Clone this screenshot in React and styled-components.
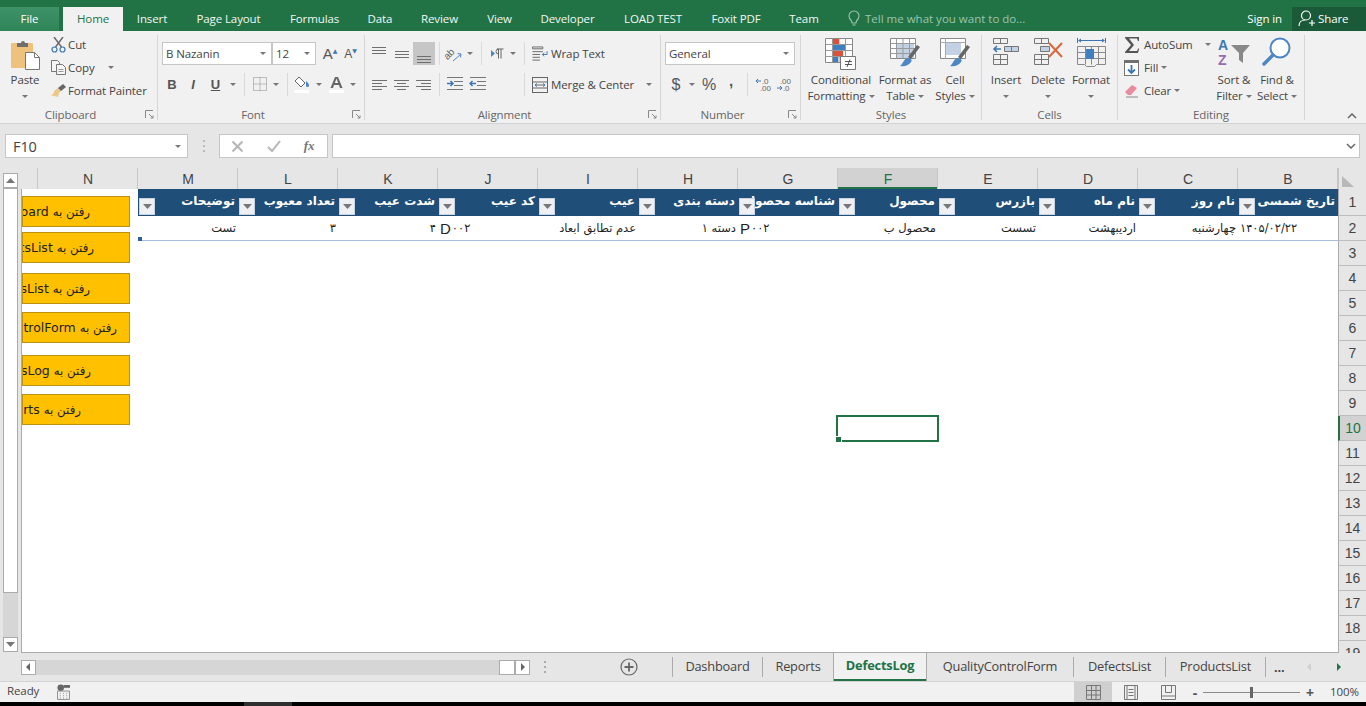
import React from 'react';
import styled, { createGlobalStyle } from 'styled-components';

const UI_FONT = '"Open Sans", "Noto Sans", "DejaVu Sans", sans-serif';
const CELL_FONT = '"DejaVu Sans", "Liberation Sans", sans-serif';
const GREEN = '#217346';

const GlobalStyle = createGlobalStyle`
  html, body { margin: 0; padding: 0; background: #000; }
  * { box-sizing: border-box; }
`;

const Page = styled.div`
  width: 1366px;
  height: 706px;
  overflow: hidden;
  display: flex;
  flex-direction: column;
  font-family: ${UI_FONT};
  font-size: 11.5px;
  letter-spacing: -0.1px;
  color: #444;
`;

/* title bar with ribbon tabs */
const TitleBar = styled.div`
  height: 31px;
  flex: none;
  padding-top: 7px;
  display: flex;
  background: ${GREEN};
`;
const FileTab = styled.div`
  width: 59px;
  margin-right: 4px;
  padding-bottom: 2px;
  display: flex;
  align-items: center;
  justify-content: center;
  color: #fff;
  background: linear-gradient(#3f9268, #2f8558);
`;
const MenuTab = styled.div`
  width: ${p => p.$w}px;
  padding-bottom: 2px;
  display: flex;
  align-items: center;
  justify-content: center;
  color: ${p => (p.$active ? GREEN : '#f2f7f4')};
  background: ${p => (p.$active ? '#f1f1f1' : 'transparent')};
`;
const TellMe = styled.div`
  display: flex;
  align-items: center;
  gap: 5px;
  margin-left: 14px;
  padding-bottom: 2px;
  letter-spacing: 0;
  color: #9cc4ae;
  flex: 1;
`;
const SignIn = styled.div`
  display: flex;
  align-items: center;
  padding-bottom: 2px;
  color: #fff;
  margin-right: 10px;
`;
const ShareTab = styled.div`
  width: 74px;
  display: flex;
  align-items: center;
  gap: 2px;
  padding: 0 0 2px 6px;
  color: #fff;
  background: #1a5a38;
`;

/* ribbon */
const Ribbon = styled.div`
  height: 93px;
  flex: none;
  display: flex;
  background: #f1f1f1;
  border-bottom: 1px solid #d2d2d2;
`;
const Group = styled.div`
  width: ${p => p.$w}px;
  flex: none;
  position: relative;
  display: flex;
  flex-direction: column;
  &::after {
    content: '';
    position: absolute;
    right: 0;
    top: 4px;
    bottom: 3px;
    width: 1px;
    background: #d6d6d6;
  }
`;
const GroupBody = styled.div`
  height: 75px;
  display: flex;
  padding-left: ${p => p.$pad ?? 4}px;
`;
const RowStack = styled.div`
  display: flex;
  flex-direction: column;
  gap: 8px;
  padding-top: 11px;
`;
const ToolRow = styled.div`
  height: 23px;
  display: flex;
  align-items: center;
`;
const GroupFoot = styled.div`
  height: 16px;
  display: flex;
  align-items: center;
  color: #666;
  padding-right: ${p => (p.$launcher ? 0 : 1)}px;
`;
const FootLabel = styled.div`
  flex: 1;
  text-align: center;
`;
const Launcher = styled.div`
  width: 17px;
  display: flex;
  justify-content: center;
`;
const LargeBtn = styled.div`
  width: ${p => p.$w}px;
  flex: none;
  padding-top: 6px;
  display: flex;
  flex-direction: column;
  align-items: center;
  line-height: 16px;
  white-space: nowrap;
`;
const LargeIcon = styled.div`
  height: 35px;
  display: flex;
  align-items: flex-start;
  justify-content: center;
`;
const CaretLine = styled.div`
  height: 16px;
  display: flex;
  align-items: center;
  justify-content: center;
  gap: 3px;
`;
const SmallStack = styled.div`
  width: ${p => p.$w}px;
  flex: none;
  display: flex;
  flex-direction: column;
  gap: 1px;
  padding-top: 2.5px;
`;
const SmallBtn = styled.div`
  height: 22px;
  display: flex;
  align-items: center;
  gap: ${p => p.$gap ?? 3}px;
  white-space: nowrap;
`;
const IconBox = styled.span`
  width: ${p => p.$w}px;
  flex: none;
  display: inline-flex;
  align-items: center;
  justify-content: center;
`;
const Slot = styled.div`
  width: ${p => p.$w}px;
  height: 23px;
  flex: none;
  display: flex;
  align-items: center;
  justify-content: center;
  color: #555;
  background: ${p => (p.$on ? '#c6c6c6' : 'transparent')};
`;
const Sep = styled.div`
  width: ${p => p.$w ?? 8}px;
  height: 23px;
  flex: none;
  display: flex;
  justify-content: center;
  &::before {
    content: '';
    width: 1px;
    background: #dadada;
  }
`;
const Gap = styled.div`
  width: ${p => p.$w}px;
  flex: none;
`;
const Caret = styled.span`
  display: inline-block;
  width: 0;
  height: 0;
  border-left: 3px solid transparent;
  border-right: 3px solid transparent;
  border-top: 3px solid #777;
  flex: none;
`;
const Combo = styled.div`
  width: ${p => p.$w}px;
  height: 23px;
  flex: none;
  display: flex;
  align-items: center;
  justify-content: space-between;
  padding: 0 5px 0 3px;
  margin-right: ${p => p.$mr ?? 0}px;
  background: #fff;
  border: 1px solid #c6c6c6;
`;
const Glyph = styled.span`
  font-family: "Liberation Sans", sans-serif;
  font-size: ${p => p.$size ?? 13}px;
  font-weight: ${p => p.$weight ?? 700};
  font-style: ${p => (p.$italic ? 'italic' : 'normal')};
  text-decoration: ${p => (p.$under ? 'underline' : 'none')};
  color: #555;
  letter-spacing: 0;
`;
const GrowMark = styled.span`
  font-size: 6px;
  align-self: flex-start;
  margin-top: 5px;
  color: #3d76b0;
`;
const CommaGlyph = styled(Glyph)`
  padding-bottom: 8px;
`;
const Collapse = styled.div`
  flex: 1;
  display: flex;
  align-items: flex-end;
  justify-content: flex-end;
  padding: 0 9px 4px 0;
`;

/* formula bar */
const FormulaBar = styled.div`
  height: 44px;
  flex: none;
  display: flex;
  padding: 10px 6px 10px 5px;
  background: #e6e6e6;
`;
const NameBox = styled.div`
  width: 183px;
  display: flex;
  align-items: center;
  justify-content: space-between;
  padding: 0 6px 0 7px;
  background: #fff;
  border: 1px solid #c6c6c6;
  font-size: 14.5px;
  color: #444;
`;
const GripDots = styled.div`
  width: 31px;
  display: flex;
  align-items: center;
  justify-content: center;
`;
const FnBox = styled.div`
  width: 109px;
  margin-right: 4px;
  display: flex;
  align-items: center;
  background: #fff;
  border: 1px solid #c6c6c6;
`;
const FnSlot = styled.div`
  width: 36px;
  display: flex;
  justify-content: center;
  color: #777;
  font-family: "Liberation Serif", serif;
  font-style: italic;
  font-weight: 700;
  font-size: 13px;
`;
const FormulaInput = styled.div`
  flex: 1;
  display: flex;
  align-items: center;
  justify-content: flex-end;
  padding-right: 3px;
  background: #fff;
  border: 1px solid #c6c6c6;
`;

/* worksheet */
const Workspace = styled.div`
  height: 485px;
  flex: none;
  display: flex;
  background: #e6e6e6;
`;
const VScroll = styled.div`
  width: 21px;
  flex: none;
  display: flex;
  flex-direction: column;
  align-items: center;
  padding: 5px 3px 1px 3px;
`;
const ScrollBtn = styled.div`
  width: ${p => p.$w ?? 15}px;
  height: ${p => p.$h ?? 15}px;
  flex: none;
  display: flex;
  align-items: center;
  justify-content: center;
  background: #fff;
  border: 1px solid #ababab;
`;
const VTrack = styled.div`
  flex: 1;
  width: 15px;
  display: flex;
  flex-direction: column;
  background: #d6d6d6;
`;
const VThumb = styled.div`
  height: 405px;
  background: #fff;
  border: 1px solid #ababab;
`;
const SheetPane = styled.div`
  width: 1317px;
  flex: none;
  display: flex;
  flex-direction: column;
`;
const ColStrip = styled.div`
  height: 21px;
  flex: none;
  display: flex;
  font-family: "Liberation Sans", sans-serif;
  font-size: 14px;
  letter-spacing: 0;
`;
const ColHead = styled.div`
  width: ${p => p.$w ?? 100}px;
  flex: none;
  display: flex;
  align-items: center;
  justify-content: center;
  padding-left: 1px;
  border-right: 1px solid #c6c6c6;
  color: ${p => (p.$on ? GREEN : '#444')};
  background: ${p => (p.$on ? '#d2d2d2' : '#e6e6e6')};
  box-shadow: ${p => (p.$on ? `inset 0 -2px 0 ${GREEN}` : 'none')};
`;
const Sheet = styled.div`
  flex: 1;
  position: relative;
  overflow: hidden;
  background: #fff;
  border-left: 1px solid #ababab;
  border-bottom: 1px solid #ababab;
`;
const TableRow = styled.div`
  height: ${p => p.$h}px;
  margin-left: 116px;
  display: flex;
  background: ${p => (p.$head ? '#1f4e79' : '#fff')};
  border-bottom: ${p => (p.$head ? 'none' : '1px solid #a3bfdd')};
`;
const Cell = styled.div`
  width: 100px;
  flex: none;
  position: relative;
  overflow: hidden;
  white-space: nowrap;
  padding: 0 2px;
  font-family: ${CELL_FONT};
  letter-spacing: 0;
  display: flex;
  align-items: center;
`;
const HeadCell = styled(Cell)`
  direction: rtl;
  color: #fff;
  font-size: 12px;
  font-weight: 700;
  padding: 0 3px 3px 2px;
`;
const DataCell = styled(Cell)`
  direction: ${p => (p.$ltr ? 'ltr' : 'rtl')};
  color: #222;
  font-size: 11.5px;
`;
const Latin = styled.span`
  font-family: "Liberation Sans", sans-serif;
  font-size: 15px;
  margin-right: 1px;
`;
const FilterBtn = styled.div`
  position: absolute;
  left: 1px;
  top: 9px;
  width: 16px;
  height: 17px;
  display: flex;
  align-items: center;
  justify-content: center;
  background: #eef0f4;
  border: 1px solid #c9d3e0;
`;
const ResizeMark = styled.div`
  position: absolute;
  left: 116px;
  top: 48px;
  width: 4px;
  height: 4px;
  background: #2f5f9e;
`;
const SheetButton = styled.div`
  position: absolute;
  left: 0;
  top: ${p => p.$top}px;
  width: 108px;
  height: 31px;
  overflow: hidden;
  white-space: nowrap;
  direction: rtl;
  padding-right: ${p => p.$inset}px;
  line-height: 29px;
  font-family: ${CELL_FONT};
  font-size: 12.5px;
  letter-spacing: 0;
  color: #222;
  background: #ffc000;
  border: 1px solid #bb9312;
`;
const ButtonVerb = styled.span`
  font-size: 11.8px;
`;
const Selection = styled.div`
  position: absolute;
  left: 814px;
  top: 226px;
  width: 103px;
  height: 27px;
  border: 2px solid ${GREEN};
  &::after {
    content: '';
    position: absolute;
    left: -3px;
    bottom: -3px;
    width: 5px;
    height: 5px;
    background: ${GREEN};
    border: 1px solid #fff;
  }
`;
const RowRail = styled.div`
  width: 28px;
  flex: none;
  display: flex;
  flex-direction: column;
  overflow: hidden;
  font-family: "Liberation Sans", sans-serif;
  font-size: 14px;
  letter-spacing: 0;
`;
const Corner = styled.div`
  height: 21px;
  flex: none;
  padding: 6px 0 0 3px;
  border-left: 1px solid #c6c6c6;
`;
const RowHead = styled.div`
  height: ${p => p.$h}px;
  flex: none;
  display: flex;
  align-items: center;
  justify-content: center;
  color: ${p => (p.$on ? GREEN : '#444')};
  background: ${p => (p.$on ? '#d2d2d2' : '#e6e6e6')};
  border-bottom: 1px solid #bdbdbd;
  border-left: ${p => (p.$on ? `2px solid ${GREEN}` : '1px solid #ababab')};
`;

/* sheet tabs */
const TabStrip = styled.div`
  height: 28px;
  flex: none;
  display: flex;
  align-items: center;
  padding-left: 21px;
  background: #e6e6e6;
  font-size: 12.8px;
  letter-spacing: -0.2px;
`;
const HScroll = styled.div`
  display: flex;
  align-items: center;
`;
const HTrack = styled.div`
  width: 463px;
  height: 15px;
  background: #d6d6d6;
`;
const AddSheet = styled.div`
  width: 128px;
  margin-left: 14px;
  display: flex;
  align-items: center;
  justify-content: space-between;
  padding-right: 34px;
`;
const SheetTab = styled.div`
  width: ${p => p.$w}px;
  height: ${p => (p.$active ? 28 : 20)}px;
  flex: none;
  padding-bottom: ${p => (p.$active ? 5 : 3)}px;
  display: flex;
  align-items: center;
  justify-content: center;
  border-left: ${p => (p.$bare ? 'none' : '1px solid #ababab')};
  border-right: ${p => (p.$active ? '1px solid #ababab' : 'none')};
  color: ${p => (p.$active ? GREEN : '#444')};
  font-weight: ${p => (p.$active ? 700 : 400)};
  background: ${p => (p.$active ? '#f1f1f1' : 'transparent')};
  box-shadow: ${p => (p.$active ? `inset 0 -2px 0 ${GREEN}` : 'none')};
`;
const TabNav = styled.div`
  flex: 1;
  display: flex;
  align-items: center;
  border-left: 1px solid #ababab;
  height: 20px;
  padding-left: 8px;
  gap: 22px;
  font-weight: 700;
`;

/* status bar */
const StatusBar = styled.div`
  height: 21px;
  flex: none;
  display: flex;
  align-items: center;
  padding-left: 7px;
  background: #f1f1f1;
  border-top: 1px solid #d2d2d2;
`;
const ReadyLabel = styled.div`
  padding-bottom: 3px;
`;
const MacroIcon = styled.div`
  margin-left: 18px;
  flex: 1;
  display: flex;
`;
const ViewBtn = styled.div`
  width: ${p => p.$w}px;
  height: 20px;
  flex: none;
  display: flex;
  align-items: center;
  justify-content: center;
  background: ${p => (p.$on ? '#cfcfcf' : 'transparent')};
`;
const ZoomSlider = styled.div`
  width: 97px;
  height: 1px;
  margin: 0 5px 0 3px;
  flex: none;
  display: flex;
  justify-content: center;
  align-items: center;
  background: #8a8a8a;
`;
const ZoomThumb = styled.div`
  width: 3px;
  height: 11px;
  flex: none;
  background: #666;
`;
const ZoomSign = styled.span`
  width: 10px;
  text-align: center;
  font-weight: 700;
  font-size: 14px;
  color: #555;
`;
const ZoomValue = styled.div`
  width: 51px;
  padding: 0 0 2px 15px;
  white-space: nowrap;
`;
const BlackBar = styled.div`
  height: 4px;
  flex: none;
  padding-left: 244px;
  background: #000;
  display: flex;
`;
const TaskbarHint = styled.div`
  width: 48px;
  background: #2e2e2e;
`;

/* icons */
const Arrow = ({ dir = 'left', fill = '#666' }) => (
  <svg width="7" height="8" viewBox="0 0 7 8">
    <path d={dir === 'left' ? 'M5 0v8L1 4z' : 'M2 0v8l4-4z'} fill={fill} />
  </svg>
);
const ScrollTri = ({ up }) => (
  <svg width="9" height="5" viewBox="0 0 9 5">
    <path d={up ? 'M0 5h9L4.500 0z' : 'M0 0h9L4.500 5z'} fill="#777" />
  </svg>
);
const LauncherIcon = () => (
  <svg width="9" height="9" viewBox="0 0 9 9" fill="none" stroke="#888">
    <path d="M.5 8V.5H8" />
    <path d="M4 4l4 4M8 5.500V8H5.500" />
  </svg>
);
const Bulb = () => (
  <svg width="12" height="17" viewBox="0 0 12 17" fill="none" stroke="#9cc4ae" strokeWidth="1.1">
    <path d="M3.500 11C2 9.500 1 8 1 6a5 5 0 0 1 10 0c0 2-1 3.500-2.500 5l-.5 2H4z" />
    <path d="M4.500 15h3" />
  </svg>
);
const ShareIcon = () => (
  <svg width="18" height="17" viewBox="0 0 18 17" fill="none" stroke="#fff" strokeWidth="1.2">
    <circle cx="8" cy="5.500" r="4.500" />
    <path d="M1 16c0-4 3-6 6-6M11 13h6M14 10v6" />
  </svg>
);
const PasteIcon = () => (
  <svg width="31" height="33" viewBox="0 0 31 33">
    <rect x="1" y="6" width="22" height="25" rx="1" fill="#eec27c" />
    <path d="M7 6h4a2 2 0 0 1 4 0h3v4H7z" fill="#6f6f6f" />
    <path d="M15.500 15.500h9l5 5v12h-14z" fill="#fff" stroke="#777" />
    <path d="M24.500 15.500v5h5" fill="none" stroke="#777" />
  </svg>
);
const CutIcon = () => (
  <svg width="15" height="16" viewBox="0 0 15 16" fill="none">
    <path d="M4.500 10L12 0M10.500 10L3 0" stroke="#666" strokeWidth="1.400" />
    <circle cx="3.500" cy="12.500" r="2.500" stroke="#3d76b0" strokeWidth="1.200" />
    <circle cx="11.500" cy="12.500" r="2.500" stroke="#3d76b0" strokeWidth="1.200" />
  </svg>
);
const CopyIcon = () => (
  <svg width="15" height="15" viewBox="0 0 15 15" fill="#f6f6f6" stroke="#777">
    <path d="M.5.500h6l2 2v9h-8z" />
    <path d="M5.500 4.500h6l3 3v7h-9z" />
    <path d="M7.500 9.500h5M7.500 11.500h5" stroke="#999" />
  </svg>
);
const PainterIcon = () => (
  <svg width="16" height="14" viewBox="0 0 16 14">
    <path d="M8 4l3 3-2 2-1 4-8-2c3 0 4-2 4-4z" fill="#ecc98a" />
    <path d="M8 4l5-4 3 3-5 4z" fill="#666" />
  </svg>
);
const BorderIcon = () => (
  <svg width="15" height="15" viewBox="0 0 15 15" fill="none" stroke="#888" strokeDasharray="1 1">
    <path d="M.5.500h13v13H.5zM7 .5v13M.5 7h13" />
  </svg>
);
const BucketIcon = () => (
  <svg width="18" height="17" viewBox="0 0 18 17">
    <path d="M5 1l6 6-4 4-6-6z" fill="#fff" stroke="#666" />
    <path d="M12 5c2 1.500 3 3 3 4.500a1.500 1.500 0 0 1-3 0z" fill="#4d86c4" />
    <rect x="0" y="14" width="15" height="3" fill="#fff" />
  </svg>
);
const FontColorIcon = () => (
  <svg width="15" height="17" viewBox="0 0 15 17">
    <path d="M1.500 12L6 1h3l4.500 11H11l-1-3H5l-1 3zM5.800 7h3.400L7.500 2.500z" fill="#666" />
    <rect x="0" y="14" width="15" height="3" fill="#fff" />
  </svg>
);
const Lines = ({ rows, w = 16, h = 22 }) => (
  <svg width={w} height={h} viewBox={`0 0 ${w} ${h}`} stroke="#6f6f6f" fill="none">
    {rows.map(([x1, x2, y]) => (
      <path key={`${x1}-${x2}-${y}`} d={`M${x1} ${y + 0.5}H${x2}`} />
    ))}
  </svg>
);
const OrientIcon = () => (
  <svg width="18" height="18" viewBox="0 0 18 18" fill="none">
    <g transform="rotate(-45 6 9)">
      <text x="-1" y="11" fontSize="10" fontFamily="Liberation Sans" fill="#666">ab</text>
    </g>
    <path d="M8 16l8-7M12.500 8.500l3.500.5-.5 3.500" stroke="#4d86c4" />
  </svg>
);
const RtlIcon = () => (
  <svg width="13" height="12" viewBox="0 0 13 12">
    <path d="M0 2v7l4-3.500z" fill="#4d86c4" />
    <path d="M6 1h6.500M7.500 1v9.500M10 1v9.500M7.500 6A2.500 2.500 0 0 1 7.500 1" stroke="#666" fill="none" />
  </svg>
);
const WrapIcon = () => (
  <svg width="17" height="16" viewBox="0 0 17 16" fill="none" stroke="#666">
    <path d="M.5 2.500h11v-2H.5zM.5 5.500h11M.5 8.500h8M.5 11.500h8M.5 14.500h8" />
    <path d="M16 5v3.500h-5M13 6.500l-2 2 2 2" stroke="#3d76b0" />
  </svg>
);
const MergeIcon = () => (
  <svg width="16" height="16" viewBox="0 0 16 16" fill="none" stroke="#666">
    <rect x=".5" y=".5" width="15" height="15" />
    <path d="M.5 5h15M.5 11h15M3 8h10" />
    <path d="M5 6.500L3 8l2 1.500M11 6.500L13 8l-2 1.500" stroke="#3d76b0" />
  </svg>
);
const IndentIcon = ({ out }) => (
  <svg width="17" height="15" viewBox="0 0 17 15" fill="none" stroke="#777">
    <path d="M1 .5h16M8 4.500h9M8 8.500h9M1 12.500h16" />
    <path d={out ? 'M7 6.500H1M3.500 4L1 6.500 3.500 9' : 'M1 6.500h6M4.500 4L7 6.500 4.500 9'} stroke="#3d76b0" strokeWidth="1.500" />
  </svg>
);
const DecimalIcon = ({ more }) => (
  <svg width="16" height="15" viewBox="0 0 16 15">
    <text x={more ? 7 : 4} y="7" fontSize="8" fontFamily="Liberation Sans" fill="#666">{more ? '.0' : '.00'}</text>
    <text x={more ? 5 : 7} y="14" fontSize="8" fontFamily="Liberation Sans" fill="#666">{more ? '.00' : '.0'}</text>
    <path d={more ? 'M6 4H1M3 2L1 4l2 2' : 'M1 11h5M4 9l2 2-2 2'} stroke="#3d76b0" fill="none" />
  </svg>
);
const CondFormatIcon = () => (
  <svg width="32" height="35" viewBox="0 0 32 35" fill="none">
    <path d="M.5 1.500h27v24H.5z" fill="#fff" stroke="#888" />
    <path d="M7.500 1.500v24M14 1.500v24M20.500 1.500v24M.5 7.500h27M.5 13.500h27M.5 19.500h27" stroke="#999" />
    <rect x="8" y="2" width="6" height="5" fill="#d9533c" />
    <rect x="8" y="8" width="12" height="5" fill="#3f7fc0" />
    <rect x="8" y="14" width="10" height="5" fill="#d9533c" />
    <rect x="8" y="20" width="5" height="5" fill="#3f7fc0" />
    <path d="M15.500 19.500h15v13h-15z" fill="#fff" stroke="#777" />
    <path d="M20 24.500h7M20 27.500h7M25 22.500l-3 7.500" stroke="#555" />
  </svg>
);
const TableIcon = () => (
  <svg width="30" height="33" viewBox="0 0 30 33" fill="none">
    <path d="M.5 1.500h25v20H.5z" fill="#fff" stroke="#888" />
    <rect x="6" y="6" width="18" height="15" fill="#c2d2e4" />
    <path d="M6.500 1.500v20M13 1.500v20M19.500 1.500v20M.5 6.500h25M.5 11.500h25M.5 16.500h25" stroke="#999" />
    <path d="M18 20l9-12 3 2-9 12z" fill="#666" />
    <path d="M10 29c3-1 3-8 9-8 3 1 3 3 2 4-2 3-6 5-11 4z" fill="#4d86c4" />
  </svg>
);
const CellStylesIcon = () => (
  <svg width="30" height="33" viewBox="0 0 30 33" fill="none">
    <path d="M.5 1.500h25v20H.5z" fill="#fff" stroke="#888" />
    <path d="M.5 5.500h25M5.500 1.500v20" stroke="#aaa" />
    <rect x="6" y="6" width="15" height="12" fill="#c2d2e4" />
    <path d="M18 20l9-12 3 2-9 12z" fill="#666" />
    <path d="M10 29c3-1 3-8 9-8 3 1 3 3 2 4-2 3-6 5-11 4z" fill="#4d86c4" />
  </svg>
);
const InsertIcon = () => (
  <svg width="28" height="28" viewBox="0 0 28 28" fill="none" stroke="#777">
    <path d="M1.500 1.500h14v5h-14zM8.500 1.500v5M1.500 17.500h14v10h-14zM1.500 22.500h14M8.500 17.500v10" />
    <path d="M12.500 9.500h14v5h-14zM19.500 9.500v5" fill="#c2d2e4" />
    <path d="M9 12H2M5 9l-3 3 3 3" stroke="#3d76b0" strokeWidth="1.500" />
  </svg>
);
const DeleteIcon = () => (
  <svg width="30" height="28" viewBox="0 0 30 28" fill="none" stroke="#777">
    <path d="M1.500 1.500h14v5h-14zM8.500 1.500v5M1.500 17.500h14v10h-14zM1.500 22.500h14M8.500 17.500v10" />
    <path d="M7.500 9.500h9v5h-9z" fill="#c2d2e4" />
    <path d="M16 6l13 14M29 6L16 20" stroke="#d9683c" strokeWidth="2" />
  </svg>
);
const FormatIcon = () => (
  <svg width="29" height="31" viewBox="0 0 29 31" fill="none" stroke="#888">
    <path d="M.5 1v5M28.500 1v5M3 3.500h23" stroke="#3d76b0" />
    <path d="M1 3.500l3-2v4zM28 3.500l-3-2v4z" fill="#3d76b0" stroke="none" />
    <path d="M.5 9.500h28v18h-9l-2 2h-8l-2-2h-7zM.5 15.500h28M.5 21.500h28M8.500 9.500v18M14.500 9.500v18M21.500 9.500v18" />
    <rect x="9" y="12" width="8" height="10" fill="#3f7fc0" stroke="none" />
  </svg>
);
const SigmaIcon = () => (
  <svg width="16" height="16" viewBox="0 0 16 16">
    <path d="M1 0h14v4h-1l-1-2.500H5L10 8l-5 6h8l1.200-2.500h1L14 16H1v-1l6-7-6-7z" fill="#555" />
  </svg>
);
const FillIcon = () => (
  <svg width="15" height="16" viewBox="0 0 15 16" fill="none">
    <rect x=".5" y=".5" width="14" height="15" fill="#fff" stroke="#777" />
    <rect x="0" y="0" width="15" height="3" fill="#707070" />
    <path d="M7.500 5v8M4 9.500l3.500 3.500L11 9.500" stroke="#3d76b0" strokeWidth="1.800" />
  </svg>
);
const EraserIcon = () => (
  <svg width="15" height="14" viewBox="0 0 15 14">
    <path d="M1 8l7-7 5 3-6 7H4z" fill="#e88aa0" />
    <path d="M2 13h12" stroke="#888" />
  </svg>
);
const SortIcon = () => (
  <svg width="32" height="30" viewBox="0 0 32 30">
    <text x="0" y="13" fontSize="14" fontWeight="700" fontFamily="Liberation Sans" fill="#3d76b0">A</text>
    <text x="0" y="28" fontSize="14" fontWeight="700" fontFamily="Liberation Sans" fill="#9a6ab5">Z</text>
    <path d="M13 8h19l-7 8v10l-4-3v-7z" fill="#888" />
  </svg>
);
const FindIcon = () => (
  <svg width="30" height="29" viewBox="0 0 30 29" fill="none">
    <circle cx="18" cy="11" r="9.500" fill="#fff" stroke="#4d86c4" strokeWidth="2" />
    <path d="M11 18L2 27" stroke="#4d86c4" strokeWidth="3.500" strokeLinecap="round" />
  </svg>
);
const ChevronUp = () => (
  <svg width="10" height="6" viewBox="0 0 10 6" fill="none" stroke="#666" strokeWidth="1.500">
    <path d="M1 5l4-4 4 4" />
  </svg>
);
const ChevronDown = () => (
  <svg width="10" height="6" viewBox="0 0 10 6" fill="none" stroke="#666" strokeWidth="1.500">
    <path d="M1 1l4 4 4-4" />
  </svg>
);
const XMark = () => (
  <svg width="13" height="13" viewBox="0 0 13 13" stroke="#b5b5b5" strokeWidth="2" fill="none">
    <path d="M1.500 1.500l10 10M11.500 1.500l-10 10" />
  </svg>
);
const CheckMark = () => (
  <svg width="14" height="12" viewBox="0 0 14 12" stroke="#b5b5b5" strokeWidth="2" fill="none">
    <path d="M1 7l4 4 8-10" />
  </svg>
);
const VDots = ({ color = '#aaa' }) => (
  <svg width="2" height="12" viewBox="0 0 2 12" fill={color}>
    <rect y="0" width="2" height="2" />
    <rect y="5" width="2" height="2" />
    <rect y="10" width="2" height="2" />
  </svg>
);
const CornerTri = () => (
  <svg width="12" height="11" viewBox="0 0 12 11">
    <path d="M0 0v11h12z" fill="#b8b8b8" />
  </svg>
);
const PlusCircle = () => (
  <svg width="18" height="18" viewBox="0 0 18 18" fill="none" stroke="#666">
    <circle cx="9" cy="9" r="8" strokeWidth="1.200" />
    <path d="M9 4.500v9M4.500 9h9" strokeWidth="1.800" />
  </svg>
);
const MacroSheet = () => (
  <svg width="13" height="16" viewBox="0 0 14 17" fill="none">
    <circle cx="4" cy="4" r="3.500" fill="#666" />
    <rect x="7" y="1" width="7" height="3" fill="#666" />
    <path d="M.5 7.500h13v9H.5z" stroke="#888" />
    <path d="M3 10h1M6.500 10h1M10 10h1M3 12.500h1M6.500 12.500h1M10 12.500h1M3 15h1M6.500 15h1M10 15h1" stroke="#888" />
  </svg>
);
const GridView = () => (
  <svg width="15" height="15" viewBox="0 0 15 15" fill="none" stroke="#777">
    <path d="M.5.500h14v14H.5zM5.500.5v14M10 .5v14M.5 5.500h14M.5 10h14" />
  </svg>
);
const PageView = () => (
  <svg width="14" height="15" viewBox="0 0 14 15" fill="none" stroke="#777">
    <path d="M.5.500h13v14H.5zM3 .5v14M11 .5v14M4.500 4.500h5M4.500 7.500h5M4.500 10.500h5" />
  </svg>
);
const BreakView = () => (
  <svg width="15" height="15" viewBox="0 0 15 15" fill="none" stroke="#777">
    <path d="M.5.500h14v14H.5zM.5 11h14M4.500.5v7h6v-7" />
  </svg>
);

const topTabs = [
  ['Home', 60], ['Insert', 58], ['Page Layout', 95], ['Formulas', 77], ['Data', 54], ['Review', 65],
  ['View', 55], ['Developer', 81], ['LOAD TEST', 90], ['Foxit PDF', 76], ['Team', 60],
];
const columns = ['N', 'M', 'L', 'K', 'J', 'I', 'H', 'G', 'F', 'E', 'D', 'C', 'B'];
const headers = ['توضیحات', 'تعداد معیوب', 'شدت عیب', 'کد عیب', 'عیب', 'دسته بندی', 'شناسه محصول', 'محصول', 'بازرس', 'نام ماه', 'نام روز', 'تاریخ شمسی'];
const values = [
  { text: 'تست' },
  { text: '۳' },
  { text: '۴' },
  { latin: 'D', text: '۰۰۲' },
  { text: 'عدم تطابق ابعاد' },
  { text: 'دسته ۱' },
  { latin: 'P', text: '۰۰۲' },
  { text: 'محصول ب' },
  { text: 'تسست' },
  { text: 'اردیبهشت' },
  { text: 'چهارشنبه' },
  { ltr: true, text: '۱۴۰۵/۰۲/۲۲' },
];
const sheetButtons = [
  { label: 'Dashboard', top: 7, inset: 39 },
  { label: 'DefectsList', top: 43, inset: 35 },
  { label: 'ProductsList', top: 84, inset: 39 },
  { label: 'QualityControlForm', top: 123, inset: 12 },
  { label: 'DefectsLog', top: 166, inset: 38 },
  { label: 'Reports', top: 205, inset: 48 },
];
const rowNumbers = Array.from({ length: 19 }, (_, i) => i + 1);

const TitleRow = () => (
  <TitleBar>
    <FileTab>File</FileTab>
    {topTabs.map(([name, w]) => (
      <MenuTab key={name} $w={w} $active={name === 'Home'}>{name}</MenuTab>
    ))}
    <TellMe><Bulb />Tell me what you want to do...</TellMe>
    <SignIn>Sign in</SignIn>
    <ShareTab><ShareIcon />Share</ShareTab>
  </TitleBar>
);

const Foot = ({ label, launcher }) => (
  <GroupFoot $launcher={launcher}>
    <FootLabel>{label}</FootLabel>
    {launcher && <Launcher><LauncherIcon /></Launcher>}
  </GroupFoot>
);

const Big = ({ w, icon, lines, caret }) => (
  <LargeBtn $w={w}>
    <LargeIcon>{icon}</LargeIcon>
    {lines.length === 2 && <div>{lines[0]}</div>}
    <CaretLine>
      {lines[lines.length - 1]}
      {caret && lines.length === 2 && <Caret />}
    </CaretLine>
    {lines.length === 1 && <CaretLine><Caret /></CaretLine>}
  </LargeBtn>
);

const RibbonRow = () => (
  <Ribbon>
    <Group $w={158}>
      <GroupBody>
        <Big w={42} icon={<PasteIcon />} lines={['Paste']} caret />
        <Gap $w={4} />
        <SmallStack $w={104}>
          <SmallBtn $gap={2}><IconBox $w={16}><CutIcon /></IconBox>Cut</SmallBtn>
          <SmallBtn $gap={2}><IconBox $w={16}><CopyIcon /></IconBox>Copy<Gap $w={9} /><Caret /></SmallBtn>
          <SmallBtn $gap={2}><IconBox $w={16}><PainterIcon /></IconBox>Format Painter</SmallBtn>
        </SmallStack>
      </GroupBody>
      <Foot label="Clipboard" launcher />
    </Group>

    <Group $w={207}>
      <GroupBody>
        <RowStack>
          <ToolRow>
            <Combo $w={110}>B Nazanin<Caret /></Combo>
            <Combo $w={44} $mr={4}>12<Caret /></Combo>
            <Slot $w={20}><Glyph $size={15} $weight={400}>A</Glyph><GrowMark>▲</GrowMark></Slot>
            <Slot $w={21}><Glyph $size={12} $weight={400}>A</Glyph><GrowMark>▼</GrowMark></Slot>
          </ToolRow>
          <ToolRow>
            <Slot $w={20}><Glyph>B</Glyph></Slot>
            <Slot $w={22}><Glyph $italic>I</Glyph></Slot>
            <Slot $w={23}><Glyph $under>U</Glyph></Slot>
            <Slot $w={12}><Caret /></Slot>
            <Sep $w={10} />
            <Slot $w={22}><BorderIcon /></Slot>
            <Slot $w={10}><Caret /></Slot>
            <Sep $w={12} />
            <Slot $w={20}><BucketIcon /></Slot>
            <Slot $w={12}><Caret /></Slot>
            <Slot $w={23}><FontColorIcon /></Slot>
            <Slot $w={10}><Caret /></Slot>
          </ToolRow>
        </RowStack>
      </GroupBody>
      <Foot label="Font" launcher />
    </Group>

    <Group $w={296}>
      <GroupBody>
        <RowStack>
          <ToolRow>
            <Slot $w={22}><Lines rows={[[0, 14, 4], [0, 14, 7], [0, 14, 10]]} /></Slot>
            <Slot $w={22}><Lines rows={[[1, 15, 8], [1, 15, 11], [1, 15, 14]]} /></Slot>
            <Slot $w={22} $on><Lines rows={[[1, 15, 13], [1, 15, 16], [1, 15, 19]]} /></Slot>
            <Sep />
            <Slot $w={22}><OrientIcon /></Slot>
            <Slot $w={9}><Caret /></Slot>
            <Sep $w={14} />
            <Slot $w={18}><RtlIcon /></Slot>
            <Slot $w={14}><Caret /></Slot>
            <Sep />
            <Gap $w={4} />
            <SmallBtn><IconBox $w={16}><WrapIcon /></IconBox>Wrap Text</SmallBtn>
          </ToolRow>
          <ToolRow>
            <Slot $w={22}><Lines rows={[[0, 15, 6], [0, 10, 9], [0, 15, 12], [0, 10, 15]]} /></Slot>
            <Slot $w={22}><Lines rows={[[0, 15, 6], [3, 12, 9], [0, 15, 12], [3, 12, 15]]} /></Slot>
            <Slot $w={22}><Lines rows={[[0, 15, 6], [5, 15, 9], [0, 15, 12], [5, 15, 15]]} /></Slot>
            <Sep />
            <Slot $w={23}><IndentIcon /></Slot>
            <Slot $w={22}><IndentIcon out /></Slot>
            <Gap $w={32} />
            <Sep />
            <Gap $w={4} />
            <SmallBtn><IconBox $w={16}><MergeIcon /></IconBox>Merge &amp; Center<Gap $w={6} /><Caret /></SmallBtn>
          </ToolRow>
        </RowStack>
      </GroupBody>
      <Foot label="Alignment" launcher />
    </Group>

    <Group $w={140}>
      <GroupBody>
        <RowStack>
          <ToolRow><Combo $w={130}>General<Caret /></Combo></ToolRow>
          <ToolRow>
            <Slot $w={22}><Glyph $size={16} $weight={400}>$</Glyph></Slot>
            <Slot $w={10}><Caret /></Slot>
            <Slot $w={24}><Glyph $size={16} $weight={400}>%</Glyph></Slot>
            <Slot $w={20}><CommaGlyph $size={15}>,</CommaGlyph></Slot>
            <Sep $w={12} />
            <Slot $w={19}><DecimalIcon more /></Slot>
            <Slot $w={24}><DecimalIcon /></Slot>
          </ToolRow>
        </RowStack>
      </GroupBody>
      <Foot label="Number" launcher />
    </Group>

    <Group $w={181}>
      <GroupBody $pad={9}>
        <Big w={62} icon={<CondFormatIcon />} lines={['Conditional', 'Formatting']} caret />
        <Big w={66} icon={<TableIcon />} lines={['Format as', 'Table']} caret />
        <Big w={34} icon={<CellStylesIcon />} lines={['Cell', 'Styles']} caret />
      </GroupBody>
      <Foot label="Styles" />
    </Group>

    <Group $w={136}>
      <GroupBody $pad={6}>
        <Big w={36} icon={<InsertIcon />} lines={['Insert']} caret />
        <Big w={48} icon={<DeleteIcon />} lines={['Delete']} caret />
        <Big w={38} icon={<FormatIcon />} lines={['Format']} caret />
      </GroupBody>
      <Foot label="Cells" />
    </Group>

    <Group $w={187}>
      <GroupBody>
        <SmallStack $w={92}>
          <SmallBtn><IconBox $w={19}><SigmaIcon /></IconBox>AutoSum<Gap $w={6} /><Caret /></SmallBtn>
          <SmallBtn><IconBox $w={19}><FillIcon /></IconBox>Fill<Caret /></SmallBtn>
          <SmallBtn><IconBox $w={19}><EraserIcon /></IconBox>Clear<Caret /></SmallBtn>
        </SmallStack>
        <Big w={40} icon={<SortIcon />} lines={['Sort &', 'Filter']} caret />
        <Big w={46} icon={<FindIcon />} lines={['Find &', 'Select']} caret />
      </GroupBody>
      <Foot label="Editing" />
    </Group>

    <Collapse><ChevronUp /></Collapse>
  </Ribbon>
);

const FormulaRow = () => (
  <FormulaBar>
    <NameBox>F10<Caret /></NameBox>
    <GripDots><VDots color="#bbb" /></GripDots>
    <FnBox>
      <FnSlot><XMark /></FnSlot>
      <FnSlot><CheckMark /></FnSlot>
      <FnSlot>fx</FnSlot>
    </FnBox>
    <FormulaInput><ChevronDown /></FormulaInput>
  </FormulaBar>
);

const SheetArea = () => (
  <Workspace>
    <VScroll>
      <ScrollBtn><ScrollTri up /></ScrollBtn>
      <VTrack><VThumb /></VTrack>
      <ScrollBtn><ScrollTri /></ScrollBtn>
    </VScroll>
    <SheetPane>
      <ColStrip>
        <ColHead $w={17} />
        {columns.map(c => (
          <ColHead key={c} $on={c === 'F'}>{c}</ColHead>
        ))}
      </ColStrip>
      <Sheet>
        <TableRow $head $h={27}>
          {headers.map(h => (
            <HeadCell key={h}>
              {h}
              <FilterBtn><ScrollTri /></FilterBtn>
            </HeadCell>
          ))}
        </TableRow>
        <TableRow $h={25}>
          {values.map((v, i) => (
            <DataCell key={i} $ltr={v.ltr || v.latin}>
              {v.latin && <Latin>{v.latin}</Latin>}
              {v.text}
            </DataCell>
          ))}
        </TableRow>
        <ResizeMark />
        {sheetButtons.map(b => (
          <SheetButton key={b.top} $top={b.top} $inset={b.inset}>
            <ButtonVerb>رفتن به</ButtonVerb> {b.label}
          </SheetButton>
        ))}
        <Selection />
      </Sheet>
    </SheetPane>
    <RowRail>
      <Corner><CornerTri /></Corner>
      {rowNumbers.map(n => (
        <RowHead key={n} $h={n === 1 ? 27 : 25} $on={n === 10}>{n}</RowHead>
      ))}
    </RowRail>
  </Workspace>
);

const TabsRow = () => (
  <TabStrip>
    <HScroll>
      <ScrollBtn><Arrow /></ScrollBtn>
      <HTrack />
      <ScrollBtn $w={16} />
      <ScrollBtn><Arrow dir="right" /></ScrollBtn>
    </HScroll>
    <AddSheet>
      <VDots />
      <PlusCircle />
    </AddSheet>
    <SheetTab $w={90}>Dashboard</SheetTab>
    <SheetTab $w={71}>Reports</SheetTab>
    <SheetTab $w={94} $active>DefectsLog</SheetTab>
    <SheetTab $w={146} $bare>QualityControlForm</SheetTab>
    <SheetTab $w={92}>DefectsList</SheetTab>
    <SheetTab $w={100}>ProductsList</SheetTab>
    <TabNav>
      ...
      <Arrow fill="#cfcfcf" />
      <Arrow dir="right" fill={GREEN} />
    </TabNav>
  </TabStrip>
);

const StatusRow = () => (
  <StatusBar>
    <ReadyLabel>Ready</ReadyLabel>
    <MacroIcon><MacroSheet /></MacroIcon>
    <ViewBtn $w={38} $on><GridView /></ViewBtn>
    <ViewBtn $w={38}><PageView /></ViewBtn>
    <ViewBtn $w={36}><BreakView /></ViewBtn>
    <Gap $w={4} />
    <ZoomSign>-</ZoomSign>
    <ZoomSlider><ZoomThumb /></ZoomSlider>
    <ZoomSign>+</ZoomSign>
    <ZoomValue>100%</ZoomValue>
  </StatusBar>
);

export default function App() {
  return (
    <Page>
      <GlobalStyle />
      <TitleRow />
      <RibbonRow />
      <FormulaRow />
      <SheetArea />
      <TabsRow />
      <StatusRow />
      <BlackBar><TaskbarHint /></BlackBar>
    </Page>
  );
}
